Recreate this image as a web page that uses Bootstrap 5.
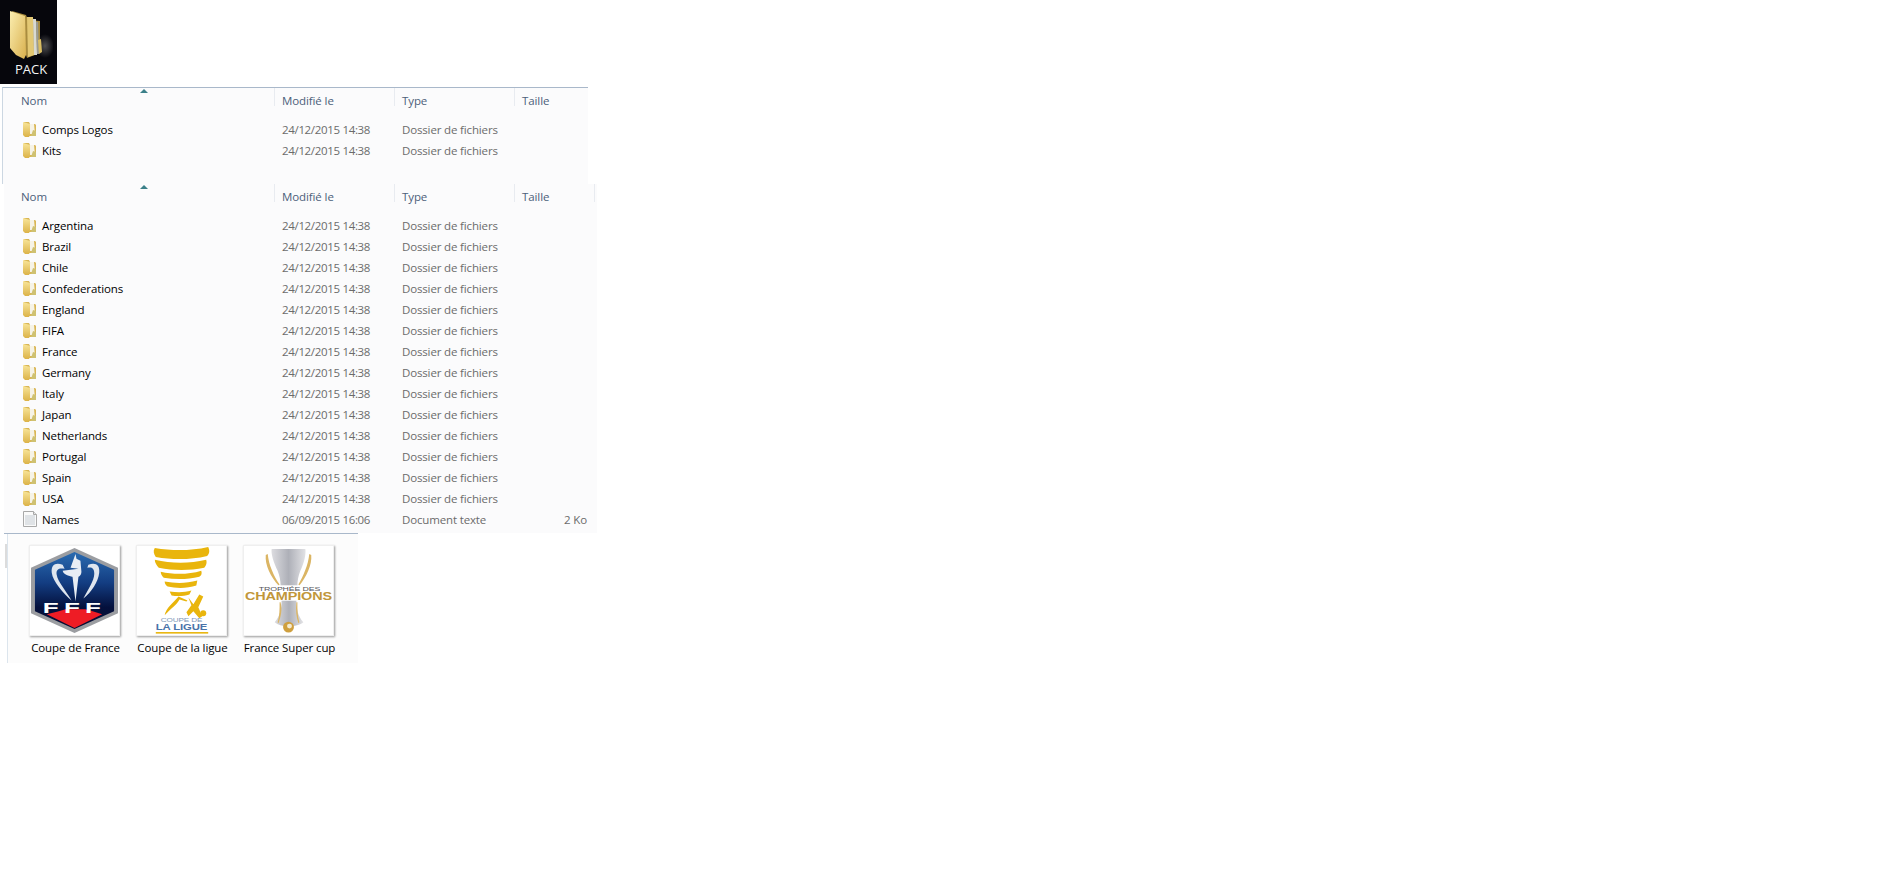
<!DOCTYPE html>
<html lang="fr">
<head>
<meta charset="utf-8">
<title>Pack</title>
<link rel="stylesheet" href="https://cdn.jsdelivr.net/npm/bootstrap@5.3.0/dist/css/bootstrap.min.css">
<style>
body{background:#fff;font-family:"Open Sans","Noto Sans",sans-serif;font-size:11.5px;letter-spacing:-.1px;color:#101010}
.pack-tile{width:57px;height:84px;background:#06060c;color:#f4f4f4;font-size:13px;letter-spacing:0}
.pack-tile svg{margin:10px 0 0 9px;width:44px;height:50px}
.pack-label{margin-top:1px;padding-left:15px;line-height:16px}
.win{background:#fbfbfc}
.win-a{margin:3px 0 0 2px;width:586px;height:97px;border-top:1px solid #a9b8ca;border-left:1px solid #ccd7e2;padding-left:1px}
.win-b{margin-left:4px;width:593px;height:349px}
.win-c{margin-left:4px;width:354px;height:130px;border-top:1px solid #a9b8ca;padding:0 0 0 3px;background:#fff}
.cols{display:grid;grid-template-columns:271px 120px 120px 80px}
.head-row{height:31px;color:#4c607a;font-size:11.5px;position:relative}
.head-cell{padding-left:7px;height:18px;line-height:26px;border-right:1px solid #e8ebf0}
.head-cell:first-child{padding-left:17px}
.sort-mark{position:absolute;left:136px;top:1px;width:0;height:0;border:4px solid transparent;border-top:0;border-bottom:4px solid #3b8089}
.file-row{height:21px;line-height:21px}
.name-cell{padding-left:19px;color:#000;display:flex;align-items:center;gap:5px}
.name-cell svg{width:14px;height:16px;flex:none;margin-top:-2px}
.meta-cell{padding-left:7px;color:#6b6b6b;letter-spacing:-.15px}
.date-cell{padding-left:7px;color:#6b6b6b;letter-spacing:-.33px}
.size-cell{padding-right:8px;text-align:right;color:#6b6b6b}
.thumb-wrap{height:129px;border-left:1px solid #dce5ed;background:#fcfcfc;padding:11px 0 0 21px;position:relative}
.thumb-mark{position:absolute;left:-3px;top:10px;width:2px;height:24px;background:#dcdcdc}
.thumb-item{width:107px;line-height:15px;color:#000}
.thumb-frame{width:91px;height:91px;background:#fff;border:1px solid #efefef;box-shadow:1px 1px 2px #9a9a9a;margin-bottom:4px}
.thumb-frame svg{display:block;width:89px;height:89px}
.thumb-cap{width:93px;text-align:center;white-space:nowrap}
</style>
</head>
<body>
<svg width="0" height="0" class="d-block">
<defs>
<linearGradient id="fg" x1="0" y1="0" x2="0" y2="1"><stop offset="0" stop-color="#f8e59a"/><stop offset="1" stop-color="#dcb348"/></linearGradient>
<symbol id="fold" viewBox="0 0 14 16">
<path d="M1 1h5l1 2h5l1 1v11H3z" fill="#d9b655"/>
<path d="M7 3h4l1 10H7z" fill="#f6f3e6"/>
<path d="M10 9l3 1v5H8z" fill="#cfc171"/>
<path d="M0 1l7 2v11l-1 2H2l-2-2z" fill="url(#fg)"/>
</symbol>
</defs>
</svg>

<div class="pack-tile">
<svg viewBox="0 0 44 50">
<defs>
<linearGradient id="bigf" x1="0" y1="0" x2="1" y2="1"><stop offset="0" stop-color="#fbeeb0"/><stop offset="1" stop-color="#d9b04e"/></linearGradient>
<radialGradient id="glow"><stop offset="0" stop-color="#777" stop-opacity=".65"/><stop offset="1" stop-color="#777" stop-opacity="0"/></radialGradient>
</defs>
<ellipse cx="36" cy="36" rx="9" ry="12" fill="url(#glow)"/>
<path d="M3 1l14 4 2 5 12 1v32l-13 5z" fill="#a98c3f"/>
<path d="M18 7h6l1 38-6 2z" fill="#e3c874"/>
<path d="M24 9h3l1 36-3 0z" fill="#d8d9d3"/>
<path d="M27 12l2 0 1 32-2 0z" fill="#9a9b94"/>
<path d="M29 30l3-1 1 13-3 2z" fill="#d9bd63"/>
<path d="M1 1l15 5 1 39-2 4-8-4-6-7z" fill="url(#bigf)"/>
</svg>
<div class="pack-label">PACK</div>
</div>

<div class="win win-a">
<div class="cols head-row"><div class="head-cell">Nom</div><div class="head-cell">Modifié le</div><div class="head-cell">Type</div><div class="head-cell border-0">Taille</div><span class="sort-mark"></span></div>
<div class="cols file-row"><div class="name-cell"><svg><use href="#fold"/></svg>Comps Logos</div><div class="date-cell">24/12/2015 14:38</div><div class="meta-cell">Dossier de fichiers</div><div></div></div>
<div class="cols file-row"><div class="name-cell"><svg><use href="#fold"/></svg>Kits</div><div class="date-cell">24/12/2015 14:38</div><div class="meta-cell">Dossier de fichiers</div><div></div></div>
</div>

<div class="win win-b">
<div class="cols head-row"><div class="head-cell">Nom</div><div class="head-cell">Modifié le</div><div class="head-cell">Type</div><div class="head-cell">Taille</div><span class="sort-mark"></span></div>
<div class="cols file-row"><div class="name-cell"><svg><use href="#fold"/></svg>Argentina</div><div class="date-cell">24/12/2015 14:38</div><div class="meta-cell">Dossier de fichiers</div><div></div></div>
<div class="cols file-row"><div class="name-cell"><svg><use href="#fold"/></svg>Brazil</div><div class="date-cell">24/12/2015 14:38</div><div class="meta-cell">Dossier de fichiers</div><div></div></div>
<div class="cols file-row"><div class="name-cell"><svg><use href="#fold"/></svg>Chile</div><div class="date-cell">24/12/2015 14:38</div><div class="meta-cell">Dossier de fichiers</div><div></div></div>
<div class="cols file-row"><div class="name-cell"><svg><use href="#fold"/></svg>Confederations</div><div class="date-cell">24/12/2015 14:38</div><div class="meta-cell">Dossier de fichiers</div><div></div></div>
<div class="cols file-row"><div class="name-cell"><svg><use href="#fold"/></svg>England</div><div class="date-cell">24/12/2015 14:38</div><div class="meta-cell">Dossier de fichiers</div><div></div></div>
<div class="cols file-row"><div class="name-cell"><svg><use href="#fold"/></svg>FIFA</div><div class="date-cell">24/12/2015 14:38</div><div class="meta-cell">Dossier de fichiers</div><div></div></div>
<div class="cols file-row"><div class="name-cell"><svg><use href="#fold"/></svg>France</div><div class="date-cell">24/12/2015 14:38</div><div class="meta-cell">Dossier de fichiers</div><div></div></div>
<div class="cols file-row"><div class="name-cell"><svg><use href="#fold"/></svg>Germany</div><div class="date-cell">24/12/2015 14:38</div><div class="meta-cell">Dossier de fichiers</div><div></div></div>
<div class="cols file-row"><div class="name-cell"><svg><use href="#fold"/></svg>Italy</div><div class="date-cell">24/12/2015 14:38</div><div class="meta-cell">Dossier de fichiers</div><div></div></div>
<div class="cols file-row"><div class="name-cell"><svg><use href="#fold"/></svg>Japan</div><div class="date-cell">24/12/2015 14:38</div><div class="meta-cell">Dossier de fichiers</div><div></div></div>
<div class="cols file-row"><div class="name-cell"><svg><use href="#fold"/></svg>Netherlands</div><div class="date-cell">24/12/2015 14:38</div><div class="meta-cell">Dossier de fichiers</div><div></div></div>
<div class="cols file-row"><div class="name-cell"><svg><use href="#fold"/></svg>Portugal</div><div class="date-cell">24/12/2015 14:38</div><div class="meta-cell">Dossier de fichiers</div><div></div></div>
<div class="cols file-row"><div class="name-cell"><svg><use href="#fold"/></svg>Spain</div><div class="date-cell">24/12/2015 14:38</div><div class="meta-cell">Dossier de fichiers</div><div></div></div>
<div class="cols file-row"><div class="name-cell"><svg><use href="#fold"/></svg>USA</div><div class="date-cell">24/12/2015 14:38</div><div class="meta-cell">Dossier de fichiers</div><div></div></div>
<div class="cols file-row"><div class="name-cell"><svg viewBox="0 0 14 16"><path d="M.5.5h10l3 3v12H.5z" fill="#fafafa" stroke="#a8a8a8"/><path d="M2 5h10M2 7h10M2 9h10M2 11h10M2 13h10" stroke="#c4cbd2"/><path d="M10.5.5v3h3" fill="#e6e6e6" stroke="#a8a8a8"/></svg>Names</div><div class="date-cell">06/09/2015 16:06</div><div class="meta-cell">Document texte</div><div class="size-cell">2 Ko</div></div>
</div>

<div class="win-c win">
<div class="thumb-wrap d-flex">
<span class="thumb-mark"></span>
<div class="thumb-item">
<div class="thumb-frame"><svg viewBox="0 0 90 90">
<defs><linearGradient id="fffb" x1="0" y1="0" x2="0" y2="1"><stop offset="0" stop-color="#2a6bb0"/><stop offset=".4" stop-color="#133d82"/><stop offset=".72" stop-color="#04103c"/><stop offset="1" stop-color="#050d30"/></linearGradient></defs>
<path d="M45 2L89 22V68L45 88 1 68V22z" fill="#9b9da1"/>
<path d="M45 6L85 24V66L45 84 5 66V24z" fill="url(#fffb)"/>
<path d="M17 69Q30 66 36 64H56Q64 66 73 69L45 83z" fill="#ee1c25"/>
<path d="M46 8l1 5 4 2 1 11c0 4-3 5-3 5l-3 25-3-25s-9-1-10-6l16-2-8-1z" fill="#e8edf4"/>
<path d="M33 19c-7-3-12 0-11 8 1 9 12 21 20 28-5-9-14-19-15-26-1-6 3-7 8-6zM59 19c7-3 12 0 11 8-1 9-8 20-16 26 4-8 11-18 11-25 0-6-3-7-7-6z" fill="#dfe6ef"/>
<text x="45" y="68" text-anchor="middle" textLength="64" lengthAdjust="spacingAndGlyphs" font-family="'Liberation Sans',sans-serif" font-weight="700" font-size="15" fill="#fff" letter-spacing="3">FFF</text>
</svg></div>
<div class="thumb-cap">Coupe de France</div>
</div>
<div class="thumb-item">
<div class="thumb-frame"><svg viewBox="0 0 90 90">
<g fill="#e9b50c">
<path d="M18 2c18 3 36 3 54-1 2 4 1 7-1 9-17 4-35 4-52 1-2-3-3-6-1-9z"/>
<path d="M18 14c17 4 35 4 52 0 1 3 0 6-2 8-15 3-31 3-46 0-2-2-4-5-4-8z"/>
<path d="M24 26c13 3 28 3 41-1 1 3 0 5-2 6-12 3-24 3-36 1-2-2-3-4-3-6z"/>
<path d="M28 36c11 2 22 2 33-1l-1 5c-9 3-20 3-29 1-2-1-3-3-3-5z"/>
<path d="M33 46c8 1 15 1 22-1l-2 4c-6 2-13 2-18 1z"/>
<path d="M42 51l9 4-1 1-7-2c-3 6-9 9-15 16 1-7 9-13 14-19z"/>
<path d="M52 52l5 7 6-10 4 2-5 11 4 9-3 2-6-7-5 5-2-4 5-7z"/>
<circle cx="67" cy="68" r="3"/>
</g>
<text x="45" y="77" text-anchor="middle" font-family="'Liberation Sans',sans-serif" font-size="6" textLength="42" lengthAdjust="spacingAndGlyphs" fill="#7d97b8">COUPE DE</text>
<text x="45" y="85" text-anchor="middle" font-family="'Liberation Sans',sans-serif" font-size="8.5" font-weight="700" textLength="52" lengthAdjust="spacingAndGlyphs" fill="#4a73a8">LA LIGUE</text>
<rect x="19" y="87" width="53" height="1.6" fill="#e9b50c"/>
</svg></div>
<div class="thumb-cap">Coupe de la ligue</div>
</div>
<div class="thumb-item">
<div class="thumb-frame"><svg viewBox="0 0 90 90">
<defs><linearGradient id="sil" x1="0" y1="0" x2="1" y2="0"><stop offset="0" stop-color="#dcdce0"/><stop offset=".5" stop-color="#aeb0b8"/><stop offset="1" stop-color="#e2e2e5"/></linearGradient></defs>
<path d="M28 3h34c1 4-1 14-5 22-2 5-3 10-3 15H37c0-5-1-10-3-15-4-8-7-18-6-22z" fill="url(#sil)"/>
<path d="M38 55h15c0 8 1 15 7 22-3 3-9 4-15 4s-11-1-14-4c6-7 7-14 7-22z" fill="url(#sil)"/>
<path d="M24 8c1 11 6 22 12 31l-1 1C27 31 21 19 22 9zM66 8c-1 11-6 22-11 31l1 1c7-9 13-21 12-31z" fill="#dbb564"/>
<path d="M37 57c2 8 0 15-2 21l-1-1c2-6 2-13 2-20zM53 57c-1 8 0 15 2 21l1-1c-2-6-2-13-2-20z" fill="#dbb564"/>
<circle cx="45" cy="82" r="5.5" fill="#cf9f3e"/><circle cx="46" cy="81" r="2.5" fill="#f3ead0"/>
<rect x="14" y="40" width="64" height="15" fill="#fff"/>
<text x="46" y="45" text-anchor="middle" font-family="'Liberation Sans',sans-serif" font-size="6" textLength="62" lengthAdjust="spacingAndGlyphs" fill="#55565c">TROPHÉE DES</text>
<text x="45" y="55" text-anchor="middle" font-family="'Liberation Sans',sans-serif" font-weight="700" font-size="10.5" textLength="88" lengthAdjust="spacingAndGlyphs" fill="#c1963a">CHAMPIONS</text>
</svg></div>
<div class="thumb-cap">France Super cup</div>
</div>
</div>
</div>
<script src="https://cdn.jsdelivr.net/npm/bootstrap@5.3.0/dist/js/bootstrap.bundle.min.js"></script>
</body>
</html>
